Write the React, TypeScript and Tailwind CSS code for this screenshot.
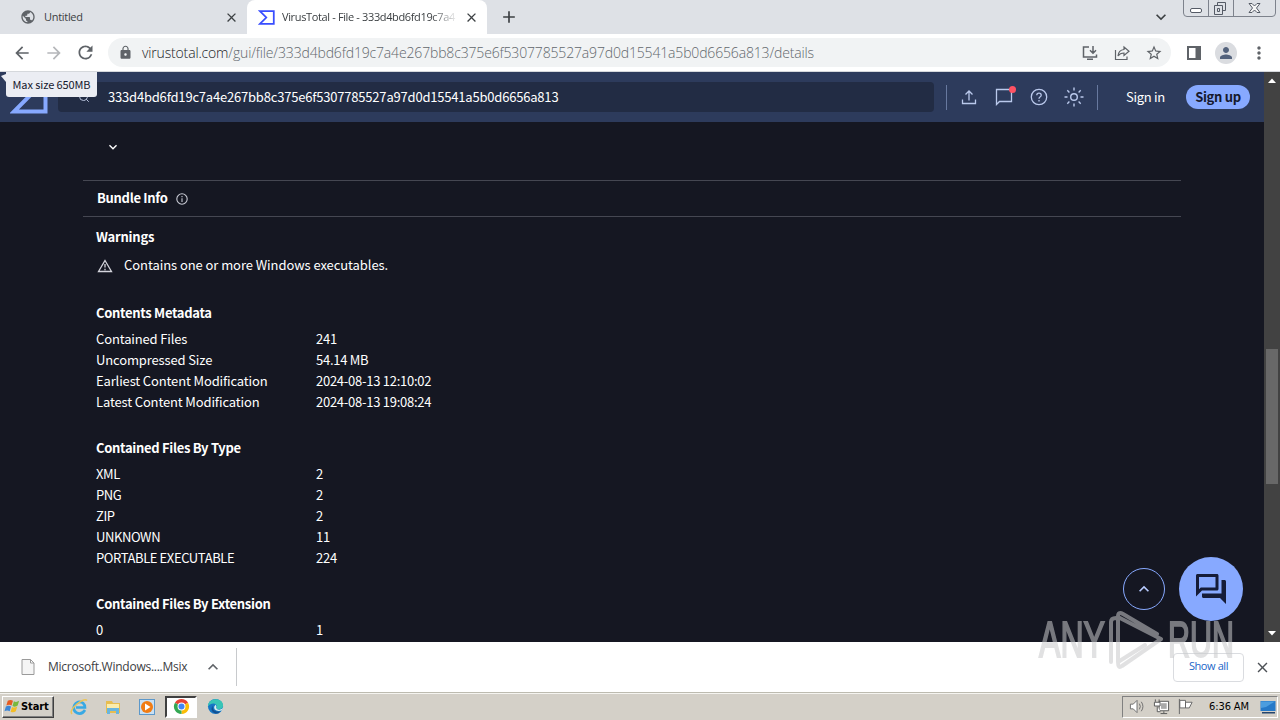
import { type ReactNode } from "react";
import {
  MdArrowBack,
  MdArrowForward,
  MdClose,
  MdAdd,
  MdLock,
  MdMoreVert,
  MdPerson,
  MdPublic,
  MdRefresh,
  MdStarBorder,
  MdOutlineForum,
  MdKeyboardArrowDown,
  MdKeyboardArrowUp,
} from "react-icons/md";
import { Search } from "lucide-react";

const HASH = "333d4bd6fd19c7a4e267bb8c375e6f5307785527a97d0d15541a5b0d6656a813";

const metadata = [
  ["Contained Files", "241"],
  ["Uncompressed Size", "54.14 MB"],
  ["Earliest Content Modification", "2024-08-13 12:10:02"],
  ["Latest Content Modification", "2024-08-13 19:08:24"],
];

const types = [
  ["XML", "2"],
  ["PNG", "2"],
  ["ZIP", "2"],
  ["UNKNOWN", "11"],
  ["PORTABLE EXECUTABLE", "224"],
];

const extensions = [["0", "1"]];

function Sigma({ className }: { className: string }) {
  return (
    <svg viewBox="0 0 38 34" fill="none" stroke="currentColor" className={className}>
      <path d="M4 2.5H35.5V31.5H4L18.5 17Z" strokeWidth="4" />
    </svg>
  );
}

function TabStrip() {
  return (
    <div className="relative flex h-[34px] bg-[#dee1e6] text-[#3c4043]">
      <div className="flex h-full w-[247px] items-center pl-5">
        <MdPublic className="size-4 text-[#5f6368]" />
        <span className="ml-2 flex-1 text-[11px] tracking-[-0.3px]">Untitled</span>
        <MdClose className="mr-2 size-[15px]" />
      </div>
      <div className="flex h-full w-[240px] items-center rounded-t-lg bg-white pl-[11px]">
        <Sigma className="h-[15px] w-[17px] text-[#394eff]" />
        <span className="ml-[7px] w-[176px] whitespace-nowrap text-[11px] tracking-[-0.36px] mask-r-from-85%">
          VirusTotal - File - 333d4bd6fd19c7a4
        </span>
        <MdClose className="ml-[6px] size-[15px]" />
      </div>
      <MdAdd className="ml-3 mt-[7px] size-5" />
      <MdKeyboardArrowDown className="ml-auto mr-[9px] mt-[7px] size-5" />
      <svg viewBox="0 0 96 18" className="mr-1 h-[18px] w-24" fill="none" stroke="#7d828c">
        <path d="M3.5 0V13Q3.5 16.5 7 16.5H92Q95.5 16.5 95.5 13V0M28.5 0V16M53.5 0V16" />
        <rect x="10.5" y="8.5" width="11" height="4" rx="1.5" stroke="#555b66" fill="#fff" />
        <path d="M37.500 5.500V2.500H45.500V10.500H43M34.500 5.500H42.500V14.500H34.500ZM37.500 8.500H39.500V11.500H37.500Z" stroke="#555b66" />
        <path d="M69 3.500H72L74.500 6L77 3.500H80L76.500 8L80 12.500H77L74.500 10L72 12.500H69L72.500 8Z" stroke="#555b66" fill="#f5f5f5" />
      </svg>
    </div>
  );
}

function Toolbar() {
  return (
    <div className="flex h-[38px] items-center border-b border-[#d5d8dc] bg-white text-[#5f6368]">
      <MdArrowBack className="ml-3 size-5" />
      <MdArrowForward className="ml-3 size-5 text-[#b5b7ba]" />
      <MdRefresh className="ml-[11px] size-[21px]" />
      <div className="ml-3 flex h-[29px] w-[1063px] items-center rounded-full bg-[#f1f3f4] pl-[10px] pr-2">
        <MdLock className="size-[15px]" />
        <span className="ml-[9px] whitespace-nowrap text-[14px] font-light tracking-[-0.16px] text-[#62676c]">
          <span className="text-[#202124]">virustotal.com</span>/gui/file/{HASH}/details
        </span>
        <svg viewBox="0 0 16 16" className="ml-auto size-4" fill="none" stroke="currentColor" strokeWidth="1.5">
          <path d="M7 2H1.500V12H14.500V9.500M5 14.300H11M11 1V8M8 5.300L11 8.300L14 5.300" />
        </svg>
        <svg viewBox="0 0 16 16" className="ml-4 size-4" fill="none" stroke="currentColor" strokeWidth="1.2">
          <path d="M1.500 5V14.500H13V11.500M10 2L15 6.200L10 10.500V8Q6 8 4 11Q4.500 5 10 4.500Z" />
        </svg>
        <MdStarBorder className="ml-[15px] size-[18px]" />
      </div>
      <svg viewBox="0 0 14 14" className="ml-[16px] size-[14px]">
        <path d="M1 1H13V13H1Z" fill="none" stroke="#5f6368" strokeWidth="2" />
        <path d="M8.500 1H14V13H8.500Z" fill="#5f6368" />
      </svg>
      <div className="ml-[14px] flex size-[22px] items-center justify-center rounded-full bg-[#dadce0]">
        <MdPerson className="size-[18px] text-[#53627c]" />
      </div>
      <MdMoreVert className="ml-3 size-5" />
    </div>
  );
}

function SiteHeader() {
  return (
    <header className="relative flex h-[50px] items-center bg-[#2d3b5c] pl-[10px] font-['Noto_Sans_CJK_JP',sans-serif] text-[13px] text-white">
      <Sigma className="h-[34px] w-[38px] text-[#87a9ff]" />
      <div className="ml-[10px] flex h-[30px] w-[876px] items-center rounded bg-[#222c44] pl-5">
        <Search className="size-3 text-[#b7c2dc]" strokeWidth={2} />
        <span className="ml-[18px] tracking-[-0.2px]">{HASH}</span>
      </div>
      <div className="ml-3 h-[25px] w-px bg-[#68799f]" />
      <div className="ml-[13px] flex items-center gap-[17px] text-[#bac9ec]">
        <svg viewBox="0 0 18 18" className="size-[18px]" fill="none" stroke="currentColor" strokeWidth="1.3">
          <path d="M9 12.500V3M5.500 6.500L9 3L12.500 6.500M2.500 11.500V15.500H15.500V11.500" />
        </svg>
        <div className="relative">
          <svg viewBox="0 0 18 18" className="size-[18px]" fill="none" stroke="currentColor" strokeWidth="1.3">
            <path d="M1.500 1.500H16.500V13.500H4.500L1.500 16.500Z" />
          </svg>
          <span className="absolute -right-[3px] -top-[2px] size-[7px] rounded-full bg-[#ff5263]" />
        </div>
        <svg viewBox="0 0 18 18" className="size-[18px]" fill="none" stroke="currentColor" strokeWidth="1.3">
          <circle cx="9" cy="9" r="7.700" />
          <path d="M6.800 7.200Q6.800 5.200 9 5.200T11.200 7.200Q11.200 8.300 10 9Q9 9.600 9 10.800M9 12V13.500" />
        </svg>
        <svg viewBox="0 0 20 20" className="-ml-px size-5" fill="none" stroke="currentColor" strokeWidth="1.4">
          <circle cx="10" cy="10" r="3.300" />
          <path d="M10 .5V3.500M10 16.500V19.500M.5 10H3.500M16.500 10H19.500M3.300 3.300L5.400 5.400M14.600 14.600L16.700 16.700M3.300 16.700L5.400 14.600M14.600 5.400L16.700 3.300" />
        </svg>
      </div>
      <div className="ml-[13px] h-[25px] w-px bg-[#68799f]" />
      <span className="ml-7 w-[40px] whitespace-nowrap tracking-[-0.3px]">Sign in</span>
      <button className="ml-5 h-6 w-16 whitespace-nowrap rounded-full bg-[#87a9ff] font-bold tracking-[-0.3px] text-[#15182d]">
        Sign up
      </button>
      {/* Upload tooltip */}
      <div className="absolute left-[6px] top-0 flex h-[25px] w-[91px] items-center justify-center whitespace-nowrap rounded-b-[3px] bg-[#ebedf3] text-[11px] tracking-[-0.1px] text-[#15182d]">
        Max size 650MB
      </div>
      <svg viewBox="0 0 6 8" className="absolute left-[1px] top-[2px] h-2 w-[6px]" fill="#ebedf3">
        <path d="M0 2L5 0V8Z" />
      </svg>
    </header>
  );
}

function Section({ title, rows, className = "" }: { title: string; rows: string[][]; className?: string }) {
  return (
    <section className={className}>
      <h2 className="mb-[5px] h-[21px] font-bold leading-[21px] tracking-[-0.3px]">{title}</h2>
      {rows.map(([label, value]) => (
        <div key={label} className="flex h-[21px] leading-[21px]">
          <span className={label === label.toUpperCase() ? "w-[220px] tracking-[-0.4px]" : "w-[220px] tracking-[-0.14px]"}>
            {label}
          </span>
          <span className="tracking-[-0.26px]">{value}</span>
        </div>
      ))}
    </section>
  );
}

function Details() {
  return (
    <main className="relative h-[520px] overflow-hidden bg-[#151722] pl-[83px] font-['Noto_Sans_CJK_JP',sans-serif] text-[13px] text-white">
      <div className="flex h-[58px] items-center pl-[22px] pb-2">
        <MdKeyboardArrowDown className="size-4" />
      </div>
      <div className="flex h-[37px] w-[1098px] items-center border-y border-[#454752] pl-[14px]">
        <span className="pb-px font-bold tracking-[-0.3px]">Bundle Info</span>
        <svg viewBox="0 0 12 12" className="ml-2 size-3" fill="none" stroke="#c8cad4" strokeWidth="1.1">
          <circle cx="6" cy="6" r="5.2" />
          <path d="M6 5.200V9M6 3V4.200" />
        </svg>
      </div>
      <div className="pl-[13px]">
        <h2 className="mt-[9px] h-[21px] font-bold leading-[21px] tracking-[-0.2px]">Warnings</h2>
        <div className="mt-[7px] flex h-[21px] items-center leading-[21px]">
          <svg viewBox="0 0 16 14" className="mr-[11px] ml-px mt-[2px] h-[14px] w-4" fill="none" stroke="#d4d4dc" strokeWidth="1.3">
            <path d="M8 1.500L14.500 12.500H1.500ZM8 5V8.500M8 9.800V11.200" />
          </svg>
          <span className="tracking-[-0.07px]">Contains one or more Windows executables.</span>
        </div>
        <Section title="Contents Metadata" rows={metadata} className="mt-[27px]" />
        <Section title="Contained Files By Type" rows={types} className="mt-[25px]" />
        <Section title="Contained Files By Extension" rows={extensions} className="mt-[25px]" />
      </div>
      {/* Floating actions */}
      <div className="absolute bottom-[21px] right-[21px] flex items-center gap-[14px]">
        <button className="flex size-[42px] items-center justify-center rounded-full border border-[#87a9ff] text-[#b8cbff]">
          <MdKeyboardArrowUp className="size-5" />
        </button>
        <button className="flex size-16 items-center justify-center rounded-full bg-[#87a9ff] text-[#151c38]">
          <MdOutlineForum className="size-9" />
        </button>
      </div>
    </main>
  );
}

function Scrollbar() {
  return (
    <div className="flex w-4 flex-col items-center justify-between bg-[#424242]">
      <svg viewBox="0 0 16 16" className="size-4" fill="#fff">
        <path d="M4 11L8 6.500L12 11Z" />
      </svg>
      <div className="mt-[119px] h-[135px] w-3 bg-[#686868]" />
      <svg viewBox="0 0 16 16" className="size-4" fill="#fff">
        <path d="M4 5L8 9.500L12 5Z" />
      </svg>
    </div>
  );
}

function DownloadBar() {
  return (
    <div className="flex h-[50px] items-center bg-white text-[12px] text-[#3c4043]">
      <svg viewBox="0 0 14 16" className="ml-[21px] h-4 w-[14px]" fill="#f5f5f5" stroke="#9a9a9a">
        <path d="M1 .5H9.500L13 4V15.500H1ZM9.500 .5V4H13" />
      </svg>
      <span className="ml-[13px] w-[140px] whitespace-nowrap tracking-[-0.25px]">Microsoft.Windows....Msix</span>
      <MdKeyboardArrowUp className="ml-[15px] size-5 text-[#5f6368]" />
      <div className="ml-[13px] h-[38px] w-px bg-[#c8cacd]" />
      <button className="ml-auto h-[29px] w-[71px] rounded border border-[#dadce0] pb-[2px] text-[11px] tracking-[-0.4px] text-[#1a66c8]">
        Show all
      </button>
      <MdClose className="ml-[10px] mr-[9px] size-[17px] text-[#4d5156]" />
    </div>
  );
}

function TaskIcon({ children, active = false }: { children: ReactNode; active?: boolean }) {
  return (
    <div
      className={
        active
          ? "flex h-[22px] w-8 items-center justify-center border-2 border-b-white border-l-[#404040] border-r-white border-t-[#404040] bg-white"
          : "flex h-[22px] w-8 items-center justify-center"
      }
    >
      {children}
    </div>
  );
}

function Taskbar() {
  return (
    <div className="flex h-7 items-center border-t border-[#bdbbb0] bg-[#d4d0c8] text-black shadow-[inset_0_1px_0_#f5f4f0]">
      <div className="ml-[2px] flex h-[22px] w-[52px] items-center border border-b-[#404040] border-l-white border-r-[#404040] border-t-white pl-px shadow-[inset_-1px_-1px_0_#808080]">
        <svg viewBox="0 0 18 18" className="size-[17px] shrink-0">
          <path d="M4 3Q7 1 9.500 3L8 8Q5.500 6.500 2.500 8Z" fill="#e75b21" />
          <path d="M10.500 3.500Q13 5 16 3L14.500 8Q12 10 9 8.500Z" fill="#79b83c" />
          <path d="M2 9Q5 7.500 7.500 9L6 14Q3.500 12.500 .5 14Z" fill="#3d86d6" />
          <path d="M8.500 9.500Q11 11 14 9L12.500 14Q10 16 7 14.500Z" fill="#f4bd25" />
        </svg>
        <span className="pt-[2px] font-['DejaVu_Sans_Condensed','DejaVu_Sans',sans-serif] text-[11px] font-bold tracking-[-0.1px]">Start</span>
      </div>
      <div className="ml-[9px] flex items-center gap-[2px]">
        <TaskIcon>
          <svg viewBox="0 0 18 18" className="size-[18px]" fill="none">
            <path d="M15 12Q12 17 7 15Q2 12 4.500 7Q8 2 13 5Q15 7 15 9.500H6" stroke="#38a9e4" strokeWidth="2.600" />
            <path d="M2 16Q-1 13 7 6Q15 0 17 2.500" stroke="#ecc456" strokeWidth="1.500" />
          </svg>
        </TaskIcon>
        <TaskIcon>
          <svg viewBox="0 0 18 18" className="size-[18px]">
            <path d="M2 3H8L9 5H16V15H2Z" fill="#e7bd50" />
            <path d="M3 6H15V12H3Z" fill="#fbecab" />
            <path d="M3 10H15V16H12V13H6V16H3Z" fill="#69b5de" />
          </svg>
        </TaskIcon>
        <TaskIcon>
          <svg viewBox="0 0 18 18" className="size-[18px]">
            <rect x="1.500" y="1.500" width="15" height="15" fill="#c9e0f3" stroke="#5c98ca" />
            <circle cx="9" cy="9" r="6" fill="#f17c13" />
            <path d="M7 5.500L12.500 9L7 12.500Z" fill="#fff" />
          </svg>
        </TaskIcon>
        <TaskIcon active>
          <svg viewBox="0 0 18 18" className="size-[17px] shrink-0">
            <path d="M9 9L2.070 5A8 8 0 0 1 15.930 5Z" fill="#e94335" />
            <path d="M9 9L15.930 5A8 8 0 0 1 9 17Z" fill="#fbbc05" />
            <path d="M9 9V17A8 8 0 0 1 2.070 5Z" fill="#34a853" />
            <circle cx="9" cy="9" r="4.200" fill="#fff" />
            <circle cx="9" cy="9" r="3.200" fill="#4285f4" />
          </svg>
        </TaskIcon>
        <TaskIcon>
          <svg viewBox="0 0 18 18" className="size-[17px]">
            <circle cx="9" cy="9" r="8" fill="#1676c5" />
            <path d="M1 9C1 -1 17 -1 17 8Q17 12 12 12Q9.500 12 10.500 9.500Q10 5 5 6Q2 6.500 1 9Z" fill="#38c5b6" />
            <path d="M6 10Q7 15 14 14.500Q11 17.500 7.500 16Q3 13 6 8Z" fill="#124f91" />
            <path d="M10 9Q9 12 13 12.500Q16 12 17 10L16 13Q11 15 8 12Q7 9 9 7Z" fill="#d9efef" />
          </svg>
        </TaskIcon>
      </div>
      <div className="ml-auto mr-[2px] flex h-[22px] w-[156px] items-center border border-b-white border-l-[#808080] border-r-white border-t-[#808080] pl-[6px]">
        <svg viewBox="0 0 18 18" className="size-[17px] shrink-0" fill="#fff" stroke="#6c6c6c">
          <path d="M1.500 6.500H4.500L8.500 2.500V15.500L4.500 11.500H1.500Z" />
          <path d="M11 6Q13 9 11 12M13 4Q16.500 9 13 14" fill="none" />
        </svg>
        <svg viewBox="0 0 18 18" className="ml-[7px] size-[17px] shrink-0" fill="#fff" stroke="#555">
          <path d="M6.500 3.500H16.500V13.500H6.500ZM8 16.500H15M11.500 14V16" />
          <path d="M8.500 5.500H14.500V11.500H8.500Z" fill="#aaa" stroke="none" />
          <path d="M1.500 4.500H7.500V8.500H1.500ZM2.500 1.500V4M6.500 1.500V4M4.500 9V14.500H8" />
        </svg>
        <svg viewBox="0 0 18 18" className="ml-[7px] size-[17px] shrink-0" fill="#fff" stroke="#666">
          <path d="M2.500 1V17M3 2.500H9V10.500H3ZM9 4.500H16L13 10.500H9Z" />
        </svg>
        <span className="ml-[15px] w-[42px] whitespace-nowrap pt-[2px] font-['DejaVu_Sans_Condensed','DejaVu_Sans',sans-serif] text-[11px] tracking-[-0.1px]">6:36 AM</span>
        <svg viewBox="0 0 16 14" className="ml-[9px] h-[14px] w-4 shrink-0">
          <path d="M.5 1H15.500V11H.5Z" fill="#2679c8" />
          <path d="M1 1.500H15L6 7L1 8Z" fill="#4c9ddf" />
          <path d="M2 12H15V13.500H2Z" fill="#24456d" />
        </svg>
      </div>
    </div>
  );
}

function Watermark() {
  return (
    <svg
      viewBox="0 0 200 64"
      className="absolute left-[1035px] top-[608px] h-16 w-[200px] opacity-55"
      fill="#c9cacc"
      stroke="#c9cacc"
      fontFamily="Liberation Sans Narrow, Liberation Sans, sans-serif"
      fontSize="50"
    >
      <text x="4" y="49" textLength="66" lengthAdjust="spacingAndGlyphs" strokeWidth="2">ANY</text>
      <text x="133" y="49" textLength="66" lengthAdjust="spacingAndGlyphs" strokeWidth="2">RUN</text>
      <path
        d="M76 54V14Q76 10 81 10M83 54V9Q83 3 88 6L122 26M83 9L126 31L87 58Q83 61 83 54L110 37"
        fill="none"
        strokeWidth="4"
        strokeLinejoin="round"
        strokeLinecap="round"
      />
    </svg>
  );
}

export default function App() {
  return (
    <div className="relative flex h-[720px] w-[1280px] flex-col overflow-hidden font-['Open_Sans',sans-serif]">
      <TabStrip />
      <Toolbar />
      <div className="flex h-[570px]">
        <div className="w-[1264px]">
          <SiteHeader />
          <Details />
        </div>
        <Scrollbar />
      </div>
      <DownloadBar />
      <Taskbar />
      <Watermark />
    </div>
  );
}
